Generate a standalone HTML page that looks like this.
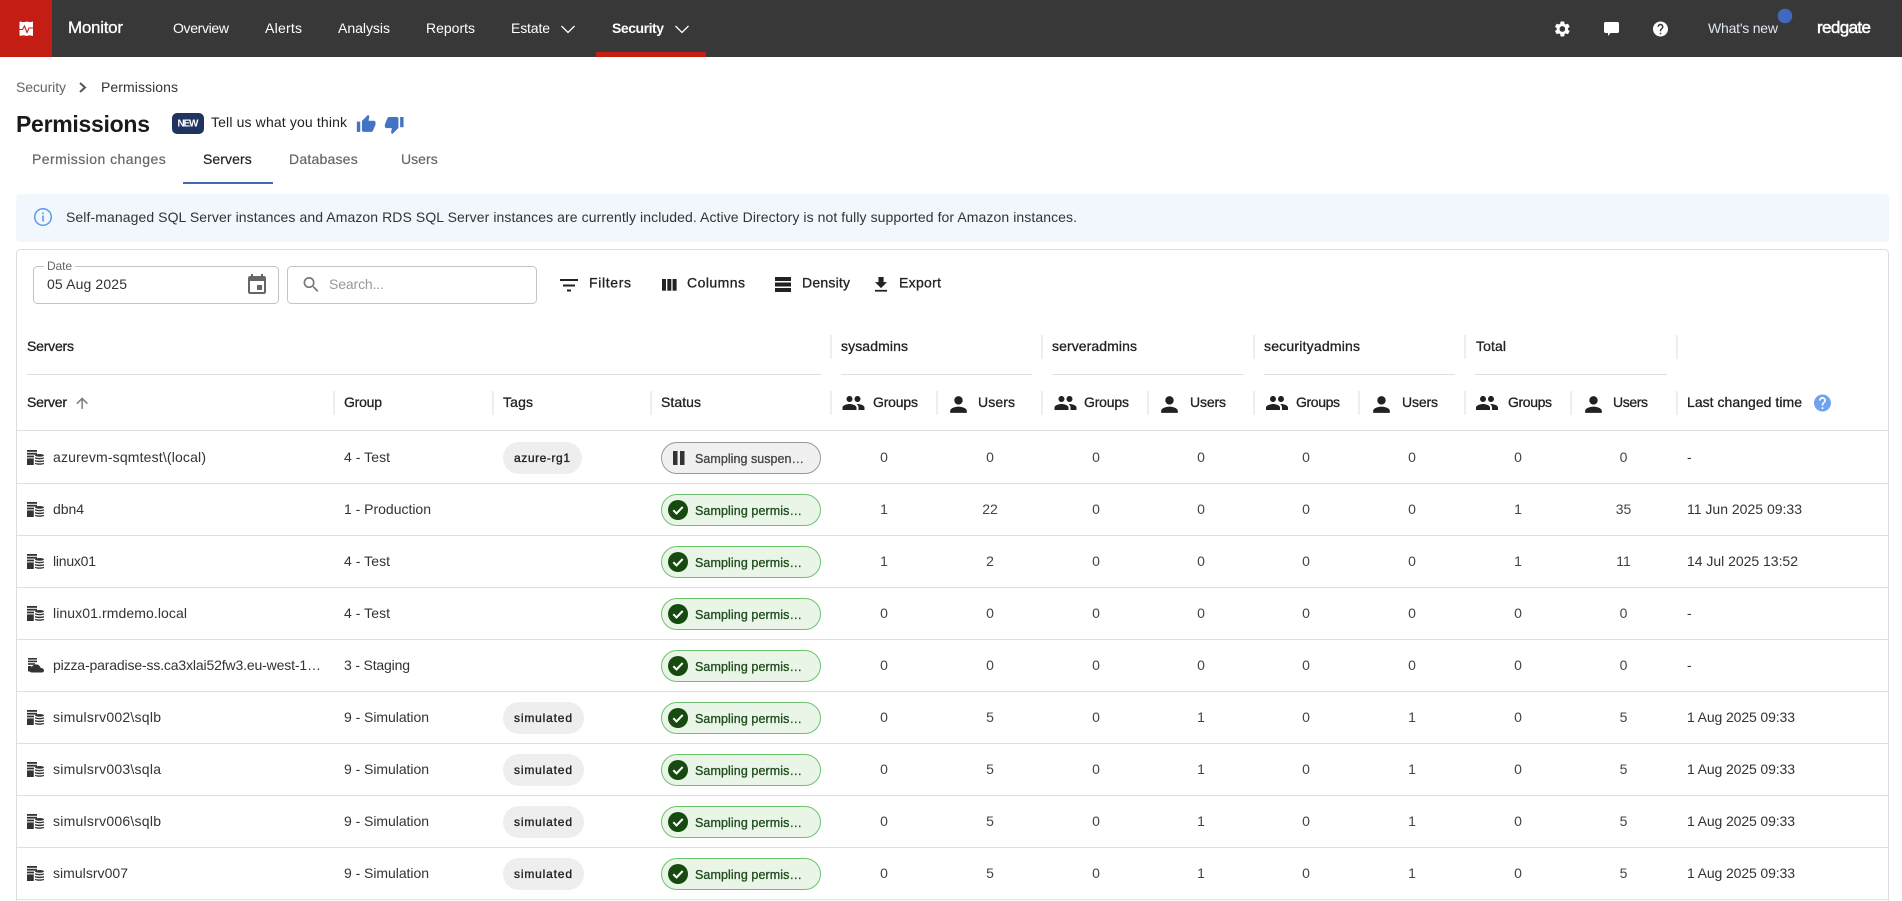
<!DOCTYPE html>
<html lang="en"><head><meta charset="utf-8"><title>Permissions - Servers</title>
<style>
html,body{margin:0;padding:0;background:#fff;width:1902px;height:901px;overflow:hidden}
svg{display:block;font-family:"Liberation Sans",Arial,sans-serif;font-size:14px;overflow:hidden}
.nav{fill:#fff;font-size:14px}
.b{fill:#333}
.g{fill:#666}
.m{fill:#222;stroke:#222;stroke-width:.3}
.tab{fill:#666;stroke:#666;stroke-width:.2;letter-spacing:.3px}
.c{text-anchor:middle;fill:#444}
.chip{fill:#222;stroke:#222;stroke-width:.35;font-size:12px}
.ps{fill:#444;stroke:#444;stroke-width:.3;font-size:12.5px}
.pg{fill:#1e4a1c;stroke:#1e4a1c;stroke-width:.3;font-size:12.5px}
.sep{fill:#eee}
.ln{fill:#e0e0e0}
</style></head><body>
<svg xmlns="http://www.w3.org/2000/svg" width="1902" height="901" viewBox="0 0 1902 901">
<defs>
<symbol id="srv" viewBox="0 0 17 15" width="17" height="15"><g fill="#333"><rect x="0" y="0" width="10" height="1.800"/><rect x="0" y="2.800" width="10" height="1.800"/><rect x="0" y="5.600" width="7" height="1.800"/><rect x="0" y="8.400" width="6.800" height="6.600"/><ellipse cx="12.500" cy="5.400" rx="4.500" ry="1.400"/><path d="M8 7.200c1.200.9 7.800.9 9 0v1.200c-1 1.200-8 1.200-9 0z"/><path d="M8 10c1.200.9 7.800.9 9 0v1.200c-1 1.200-8 1.200-9 0z"/><path d="M8 12.700c1.200.9 7.800.9 9 0v1.200c-1 1.200-8 1.200-9 0z"/></g></symbol>
<symbol id="cld" viewBox="0 0 16 15" width="16" height="15"><g fill="#333"><rect x="0" y="0" width="9" height="1.600"/><rect x="0" y="2.600" width="9" height="1.600"/><rect x="0" y="5.200" width="7" height="1.600"/><rect x="0" y="8" width="3.500" height="5.500"/><path d="M4 14.500c-1.600 0-2.600-1-2.600-2.300 0-1.200.9-2.100 2.100-2.300C4 7.800 5.800 6.400 8 6.400c2.300 0 4.100 1.400 4.600 3.500 1.900.1 3.400 1.100 3.400 2.600 0 1.200-1 2-2.500 2z"/></g></symbol>
<symbol id="grp" viewBox="0 0 24 24" width="24" height="24"><path fill="#222" d="M16 11c1.660 0 2.990-1.340 2.990-3S17.660 5 16 5c-1.660 0-3 1.340-3 3s1.340 3 3 3zm-8 0c1.660 0 2.990-1.340 2.990-3S9.660 5 8 5C6.340 5 5 6.340 5 8s1.340 3 3 3zm0 2c-2.330 0-7 1.170-7 3.500V19h14v-2.500c0-2.330-4.670-3.500-7-3.500zm8 0c-.29 0-.62.02-.97.05 1.160.84 1.970 1.970 1.970 3.450V19h6v-2.500c0-2.330-4.670-3.500-7-3.500z"/></symbol>
<symbol id="usr" viewBox="0 0 24 24" width="25" height="25"><path fill="#222" d="M12 12c2.210 0 4-1.790 4-4s-1.790-4-4-4-4 1.790-4 4 1.790 4 4 4zm0 2c-2.670 0-8 1.340-8 4v2h16v-2c0-2.660-5.330-4-8-4z"/></symbol>
<symbol id="ok" viewBox="0 0 20 20" width="20" height="20"><circle cx="10" cy="10" r="10" fill="#164a10"/><path d="M5.300 10.200l3.200 3.200 6.200-6.400" fill="none" stroke="#fff" stroke-width="2"/></symbol>
<symbol id="pillg" viewBox="0 0 161 33" width="161" height="33"><rect x=".5" y=".5" width="159" height="31" rx="15.500" fill="#e9f5e7" stroke="#6cc56b"/></symbol>
<symbol id="chip" viewBox="0 0 82 32" width="82" height="32"><rect width="81" height="32" rx="16" fill="#eeeeee"/></symbol>
</defs>

<!-- top nav -->
<rect width="1902" height="57" fill="#383838"/>
<rect width="52" height="57" fill="#c41d13"/>
<path d="M20.500 21.500c1.800.8 3.800.8 6.500 0 2.600.8 3.900.8 5.500 0 .5 0 .5.400.5 1v12c0 .6 0 1.500-.5 1.500-1.800-.8-3.300-.8-6 0-2.500-.8-4.300-.8-6 0-.5 0-1-.9-1-1.500v-12c0-.6.500-1 1-1z" fill="#fff"/>
<polyline points="19,29.500 22.500,29.500 24.500,26 27,32.500 29,28 33,28" fill="none" stroke="#c41d13" stroke-width="1.100"/>
<text x="68" y="33" font-size="17" fill="#fff" stroke="#fff" stroke-width=".3" textLength="55">Monitor</text>
<text class="nav" x="173" y="33" textLength="56">Overview</text>
<text class="nav" x="265" y="33" textLength="37">Alerts</text>
<text class="nav" x="338" y="33" textLength="52">Analysis</text>
<text class="nav" x="426" y="33" textLength="49">Reports</text>
<text class="nav" x="511" y="33" textLength="39">Estate</text>
<polyline points="561.500,26 568,32.500 574.500,26" fill="none" stroke="#fff" stroke-width="1.300"/>
<text class="nav" x="612" y="33" font-weight="bold" textLength="52">Security</text>
<polyline points="675.500,26 682,32.500 688.500,26" fill="none" stroke="#fff" stroke-width="1.300"/>
<rect x="596" y="52" width="110" height="5" fill="#c41d13"/>

<g transform="translate(1553 19.600) scale(.78)"><path fill="#fff" d="M19.140 12.940c.04-.3.06-.61.06-.94 0-.32-.02-.64-.07-.94l2.030-1.580c.18-.14.23-.41.12-.61l-1.920-3.320c-.12-.22-.37-.29-.59-.22l-2.390.96c-.5-.38-1.030-.7-1.620-.94l-.36-2.540c-.04-.24-.24-.41-.48-.41h-3.840c-.24 0-.43.17-.47.41l-.36 2.540c-.59.24-1.130.57-1.620.94l-2.390-.96c-.22-.08-.47 0-.59.22L2.740 8.870c-.12.21-.08.47.12.61l2.030 1.580c-.05.3-.09.63-.09.94s.02.64.07.94l-2.030 1.580c-.18.14-.23.41-.12.61l1.920 3.320c.12.22.37.29.59.22l2.390-.96c.5.38 1.030.7 1.620.94l.36 2.540c.05.24.24.41.48.41h3.840c.24 0 .44-.17.47-.41l.36-2.540c.59-.24 1.130-.56 1.620-.94l2.390.96c.22.08.47 0 .59-.22l1.920-3.320c.12-.22.07-.47-.12-.61l-2.010-1.580zM12 15.600c-1.980 0-3.600-1.620-3.600-3.600s1.620-3.600 3.600-3.600 3.600 1.620 3.600 3.600-1.620 3.600-3.600 3.600z"/></g>
<path fill="#fff" d="M1605.500 22h12c.8 0 1.500.7 1.500 1.500v8c0 .8-.7 1.500-1.500 1.500h-7l-2.500 3v-3h-2.500c-.8 0-1.500-.7-1.500-1.500v-8c0-.8.700-1.500 1.500-1.500z"/>
<g transform="translate(1651.500 20) scale(.75)"><path fill="#fff" d="M12 2C6.480 2 2 6.480 2 12s4.480 10 10 10 10-4.480 10-10S17.520 2 12 2zm1 17h-2v-2h2v2zm2.070-7.750l-.9.920C13.450 12.900 13 13.500 13 15h-2v-.5c0-1.100.45-2.100 1.170-2.830l1.240-1.260c.37-.36.59-.86.59-1.410 0-1.100-.9-2-2-2s-2 .9-2 2H8c0-2.210 1.790-4 4-4s4 1.790 4 4c0 .88-.36 1.680-.93 2.250z"/></g>
<text x="1708" y="33" fill="#dfe6f0" textLength="70">What's new</text>
<circle cx="1785" cy="16" r="7.300" fill="#4169c0"/>
<text x="1817" y="33" font-size="17" fill="#fff" stroke="#fff" stroke-width=".5" textLength="54">redgate</text>

<!-- breadcrumb & title -->
<text class="g" x="16" y="92" textLength="50">Security</text>
<polyline points="80,83 85,87.500 80,92" fill="none" stroke="#555" stroke-width="2"/>
<text class="b" x="101" y="92" textLength="77">Permissions</text>
<text x="16" y="132" font-size="23" font-weight="bold" fill="#1a1a1a" textLength="134">Permissions</text>
<rect x="172" y="113" width="32" height="21" rx="5" fill="#1f3460"/>
<text x="177.500" y="126.500" font-size="10" font-weight="bold" fill="#fff" textLength="21">NEW</text>
<text x="211" y="127" fill="#222" textLength="136">Tell us what you think</text>
<g transform="translate(356 114) scale(.85)"><path fill="#4472c4" d="M1 21h4V9H1v12zm22-11c0-1.100-.9-2-2-2h-6.310l.95-4.570.03-.32c0-.41-.17-.79-.44-1.060L14.170 1 7.590 7.590C7.220 7.950 7 8.450 7 9v10c0 1.100.9 2 2 2h9c.83 0 1.540-.5 1.840-1.220l3.020-7.050c.09-.23.14-.47.14-.73v-2z"/></g>
<g transform="translate(384 114.500) scale(.85)"><path fill="#4472c4" d="M15 3H6c-.83 0-1.540.5-1.840 1.220l-3.020 7.050c-.09.23-.14.47-.14.73v2c0 1.100.9 2 2 2h6.310l-.95 4.570-.03.32c0 .41.17.79.44 1.060L9.830 23l6.590-6.590c.36-.36.58-.86.58-1.410V5c0-1.100-.9-2-2-2zm4 0v12h4V3h-4z"/></g>

<!-- tabs -->
<text class="tab" x="32" y="164" textLength="134">Permission changes</text>
<text class="tab" x="203" y="164" style="fill:#222;stroke:#222" textLength="49">Servers</text>
<text class="tab" x="289" y="164" textLength="69">Databases</text>
<text class="tab" x="401" y="164" textLength="37">Users</text>
<rect x="183" y="182" width="90" height="2" fill="#4468b8"/>

<!-- banner -->
<rect x="16" y="194" width="1873" height="48" rx="4" fill="#f2f6fd"/>
<circle cx="43" cy="217" r="8.300" fill="none" stroke="#5b9bea" stroke-width="1.500"/>
<rect x="42.200" y="215.500" width="1.600" height="6" fill="#5b9bea"/><rect x="42.200" y="212.500" width="1.600" height="1.700" fill="#5b9bea"/>
<text class="b" x="66" y="222" textLength="1011">Self-managed SQL Server instances and Amazon RDS SQL Server instances are currently included. Active Directory is not fully supported for Amazon instances.</text>

<!-- card -->
<path d="M16.500 901V253.500a4 4 0 0 1 4-4H1884.500a4 4 0 0 1 4 4V901" fill="none" stroke="#ddd"/>

<!-- toolbar -->
<rect x="33.500" y="266.500" width="245" height="37" rx="4" fill="#fff" stroke="#c4c4c4"/>
<rect x="44" y="263" width="31" height="6" fill="#fff"/>
<text class="g" x="47" y="270" font-size="12" textLength="25">Date</text>
<text class="b" x="47" y="289" textLength="80">05 Aug 2025</text>
<g transform="translate(245 273)"><path fill="#666" d="M17 12h-5v5h5v-5zM16 1v2H8V1H6v2H5c-1.110 0-1.990.9-1.990 2L3 19c0 1.100.89 2 2 2h14c1.100 0 2-.9 2-2V5c0-1.100-.9-2-2-2h-1V1h-2zm3 18H5V8h14v11z"/></g>
<rect x="287.500" y="266.500" width="249" height="37" rx="4" fill="#fff" stroke="#c4c4c4"/>
<g transform="translate(301 274.500) scale(.85)"><path fill="#777" d="M15.500 14h-.79l-.28-.27C15.410 12.590 16 11.110 16 9.500 16 5.910 13.090 3 9.500 3S3 5.910 3 9.500 5.910 16 9.500 16c1.610 0 3.090-.59 4.230-1.570l.27.28v.79l5 4.990L20.490 19l-4.990-5zm-6 0C7.010 14 5 11.990 5 9.500S7.010 5 9.500 5 14 7.010 14 9.500 11.990 14 9.500 14z"/></g>
<text x="329" y="289" fill="#999" textLength="55">Search...</text>
<g fill="#222"><rect x="560" y="279" width="18" height="2"/><rect x="563" y="284.500" width="12" height="2"/><rect x="567" y="289.500" width="4" height="2"/></g>
<text class="m" x="589" y="287.500" textLength="42">Filters</text>
<g fill="#222"><rect x="662" y="279" width="4" height="11.700"/><rect x="667.300" y="279" width="4" height="11.700"/><rect x="672.600" y="279" width="4" height="11.700"/></g>
<text class="m" x="687" y="287.500" textLength="58">Columns</text>
<g fill="#222"><rect x="775" y="277" width="16" height="4"/><rect x="775" y="282.500" width="16" height="4"/><rect x="775" y="288" width="16" height="4"/></g>
<text class="m" x="802" y="287.500" textLength="48">Density</text>
<g transform="translate(870.700 274.400) scale(.86)"><path fill="#222" d="M19 9h-4V3H9v6H5l7 7 7-7zM5 18v2h14v-2H5z"/></g>
<text class="m" x="899" y="287.500" textLength="42">Export</text>

<!-- group header -->
<text class="m" x="27" y="351" textLength="47">Servers</text>
<text class="m" x="841" y="351" textLength="67">sysadmins</text>
<text class="m" x="1052" y="351" textLength="85">serveradmins</text>
<text class="m" x="1264" y="351" textLength="96">securityadmins</text>
<text class="m" x="1476" y="351" textLength="30">Total</text>
<g class="sep"><rect x="830" y="335" width="2" height="24"/><rect x="1041" y="335" width="2" height="24"/><rect x="1253" y="335" width="2" height="24"/><rect x="1464" y="335" width="2" height="24"/><rect x="1676" y="335" width="2" height="24"/></g>
<g class="ln"><rect x="27" y="374" width="794" height="1"/><rect x="841" y="374" width="191" height="1"/><rect x="1052" y="374" width="192" height="1"/><rect x="1264" y="374" width="191" height="1"/><rect x="1475" y="374" width="192" height="1"/></g>

<!-- column header -->
<text class="m" x="27" y="407" textLength="40">Server</text>
<g transform="translate(73.500 394.500) scale(.72)"><path fill="#777" d="M4 12l1.410 1.410L11 7.830V20h2V7.830l5.580 5.590L20 12l-8-8-8 8z"/></g>
<text class="m" x="344" y="407" textLength="38">Group</text>
<text class="m" x="503" y="407" textLength="30">Tags</text>
<text class="m" x="661" y="407" textLength="40">Status</text>
<g class="sep"><rect x="333" y="391" width="2" height="24"/><rect x="492" y="391" width="2" height="24"/><rect x="650" y="391" width="2" height="24"/><rect x="830" y="391" width="2" height="24"/><rect x="936" y="391" width="2" height="24"/><rect x="1041" y="391" width="2" height="24"/><rect x="1147" y="391" width="2" height="24"/><rect x="1253" y="391" width="2" height="24"/><rect x="1358" y="391" width="2" height="24"/><rect x="1464" y="391" width="2" height="24"/><rect x="1570" y="391" width="2" height="24"/><rect x="1676" y="391" width="2" height="24"/></g>
<use href="#grp" x="841.500" y="391"/><text class="m" x="873" y="407" textLength="45">Groups</text>
<use href="#usr" x="946" y="392"/><text class="m" x="978" y="407" textLength="37">Users</text>
<use href="#grp" x="1053.500" y="391"/><text class="m" x="1084" y="407" textLength="45">Groups</text>
<use href="#usr" x="1157" y="392"/><text class="m" x="1190" y="407" textLength="36">Users</text>
<use href="#grp" x="1265" y="391"/><text class="m" x="1296" y="407" textLength="44">Groups</text>
<use href="#usr" x="1369" y="392"/><text class="m" x="1402" y="407" textLength="36">Users</text>
<use href="#grp" x="1475" y="391"/><text class="m" x="1508" y="407" textLength="44">Groups</text>
<use href="#usr" x="1581" y="392"/><text class="m" x="1613" y="407" textLength="35">Users</text>
<text class="m" x="1687" y="407" textLength="115">Last changed time</text>
<g transform="translate(1812.300 392.800) scale(.85)"><path fill="#6fa3ef" d="M12 2C6.480 2 2 6.480 2 12s4.480 10 10 10 10-4.480 10-10S17.520 2 12 2zm1 17h-2v-2h2v2zm2.070-7.750l-.9.920C13.450 12.900 13 13.500 13 15h-2v-.5c0-1.100.45-2.100 1.170-2.830l1.240-1.260c.37-.36.59-.86.59-1.410 0-1.100-.9-2-2-2s-2 .9-2 2H8c0-2.210 1.790-4 4-4s4 1.790 4 4c0 .88-.36 1.680-.93 2.250z"/></g>

<!-- row lines -->
<g class="ln"><rect x="17" y="430" width="1871" height="1"/><rect x="17" y="483" width="1871" height="1"/><rect x="17" y="535" width="1871" height="1"/><rect x="17" y="587" width="1871" height="1"/><rect x="17" y="639" width="1871" height="1"/><rect x="17" y="691" width="1871" height="1"/><rect x="17" y="743" width="1871" height="1"/><rect x="17" y="795" width="1871" height="1"/><rect x="17" y="847" width="1871" height="1"/><rect x="17" y="899" width="1871" height="1"/></g>

<!-- row 1 -->
<use href="#srv" x="27" y="450"/><text class="b" x="53" y="462" textLength="153">azurevm-sqmtest\(local)</text><text class="b" x="344" y="462" textLength="46">4 - Test</text>
<rect x="503" y="442" width="79" height="32" rx="16" fill="#eee"/><text class="chip" x="514" y="462" textLength="56">azure-rg1</text>
<rect x="661.500" y="442.500" width="159" height="31" rx="15.500" fill="#f0f0f0" stroke="#999"/><rect x="673" y="451" width="4.500" height="14" fill="#333"/><rect x="680" y="451" width="4.500" height="14" fill="#333"/><text class="ps" x="695" y="463" textLength="109">Sampling suspen…</text>
<text class="c" x="884" y="462">0</text><text class="c" x="990" y="462">0</text><text class="c" x="1096" y="462">0</text><text class="c" x="1201" y="462">0</text><text class="c" x="1306" y="462">0</text><text class="c" x="1412" y="462">0</text><text class="c" x="1518" y="462">0</text><text class="c" x="1623.500" y="462">0</text><text class="b" x="1687" y="462">-</text>

<!-- row 2 -->
<use href="#srv" x="27" y="502"/><text class="b" x="53" y="514" textLength="31">dbn4</text><text class="b" x="344" y="514" textLength="87">1 - Production</text>
<use href="#pillg" x="661" y="494"/><use href="#ok" x="668" y="500"/><text class="pg" x="695" y="515" textLength="107">Sampling permis…</text>
<text class="c" x="884" y="514">1</text><text class="c" x="990" y="514">22</text><text class="c" x="1096" y="514">0</text><text class="c" x="1201" y="514">0</text><text class="c" x="1306" y="514">0</text><text class="c" x="1412" y="514">0</text><text class="c" x="1518" y="514">1</text><text class="c" x="1623.500" y="514">35</text><text class="b" x="1687" y="514" textLength="115">11 Jun 2025 09:33</text>

<!-- row 3 -->
<use href="#srv" x="27" y="554"/><text class="b" x="53" y="566" textLength="43">linux01</text><text class="b" x="344" y="566" textLength="46">4 - Test</text>
<use href="#pillg" x="661" y="546"/><use href="#ok" x="668" y="552"/><text class="pg" x="695" y="567" textLength="107">Sampling permis…</text>
<text class="c" x="884" y="566">1</text><text class="c" x="990" y="566">2</text><text class="c" x="1096" y="566">0</text><text class="c" x="1201" y="566">0</text><text class="c" x="1306" y="566">0</text><text class="c" x="1412" y="566">0</text><text class="c" x="1518" y="566">1</text><text class="c" x="1623.500" y="566">11</text><text class="b" x="1687" y="566" textLength="111">14 Jul 2025 13:52</text>

<!-- row 4 -->
<use href="#srv" x="27" y="606"/><text class="b" x="53" y="618" textLength="134">linux01.rmdemo.local</text><text class="b" x="344" y="618" textLength="46">4 - Test</text>
<use href="#pillg" x="661" y="598"/><use href="#ok" x="668" y="604"/><text class="pg" x="695" y="619" textLength="107">Sampling permis…</text>
<text class="c" x="884" y="618">0</text><text class="c" x="990" y="618">0</text><text class="c" x="1096" y="618">0</text><text class="c" x="1201" y="618">0</text><text class="c" x="1306" y="618">0</text><text class="c" x="1412" y="618">0</text><text class="c" x="1518" y="618">0</text><text class="c" x="1623.500" y="618">0</text><text class="b" x="1687" y="618">-</text>

<!-- row 5 -->
<use href="#cld" x="28" y="658"/><text class="b" x="53" y="670" textLength="268">pizza-paradise-ss.ca3xlai52fw3.eu-west-1…</text><text class="b" x="344" y="670" textLength="66">3 - Staging</text>
<use href="#pillg" x="661" y="650"/><use href="#ok" x="668" y="656"/><text class="pg" x="695" y="671" textLength="107">Sampling permis…</text>
<text class="c" x="884" y="670">0</text><text class="c" x="990" y="670">0</text><text class="c" x="1096" y="670">0</text><text class="c" x="1201" y="670">0</text><text class="c" x="1306" y="670">0</text><text class="c" x="1412" y="670">0</text><text class="c" x="1518" y="670">0</text><text class="c" x="1623.500" y="670">0</text><text class="b" x="1687" y="670">-</text>

<!-- row 6 -->
<use href="#srv" x="27" y="710"/><text class="b" x="53" y="722" textLength="108">simulsrv002\sqlb</text><text class="b" x="344" y="722" textLength="85">9 - Simulation</text>
<use href="#chip" x="503" y="702"/><text class="chip" x="514" y="722" textLength="58">simulated</text>
<use href="#pillg" x="661" y="702"/><use href="#ok" x="668" y="708"/><text class="pg" x="695" y="723" textLength="107">Sampling permis…</text>
<text class="c" x="884" y="722">0</text><text class="c" x="990" y="722">5</text><text class="c" x="1096" y="722">0</text><text class="c" x="1201" y="722">1</text><text class="c" x="1306" y="722">0</text><text class="c" x="1412" y="722">1</text><text class="c" x="1518" y="722">0</text><text class="c" x="1623.500" y="722">5</text><text class="b" x="1687" y="722" textLength="108">1 Aug 2025 09:33</text>

<!-- row 7 -->
<use href="#srv" x="27" y="762"/><text class="b" x="53" y="774" textLength="108">simulsrv003\sqla</text><text class="b" x="344" y="774" textLength="85">9 - Simulation</text>
<use href="#chip" x="503" y="754"/><text class="chip" x="514" y="774" textLength="58">simulated</text>
<use href="#pillg" x="661" y="754"/><use href="#ok" x="668" y="760"/><text class="pg" x="695" y="775" textLength="107">Sampling permis…</text>
<text class="c" x="884" y="774">0</text><text class="c" x="990" y="774">5</text><text class="c" x="1096" y="774">0</text><text class="c" x="1201" y="774">1</text><text class="c" x="1306" y="774">0</text><text class="c" x="1412" y="774">1</text><text class="c" x="1518" y="774">0</text><text class="c" x="1623.500" y="774">5</text><text class="b" x="1687" y="774" textLength="108">1 Aug 2025 09:33</text>

<!-- row 8 -->
<use href="#srv" x="27" y="814"/><text class="b" x="53" y="826" textLength="108">simulsrv006\sqlb</text><text class="b" x="344" y="826" textLength="85">9 - Simulation</text>
<use href="#chip" x="503" y="806"/><text class="chip" x="514" y="826" textLength="58">simulated</text>
<use href="#pillg" x="661" y="806"/><use href="#ok" x="668" y="812"/><text class="pg" x="695" y="827" textLength="107">Sampling permis…</text>
<text class="c" x="884" y="826">0</text><text class="c" x="990" y="826">5</text><text class="c" x="1096" y="826">0</text><text class="c" x="1201" y="826">1</text><text class="c" x="1306" y="826">0</text><text class="c" x="1412" y="826">1</text><text class="c" x="1518" y="826">0</text><text class="c" x="1623.500" y="826">5</text><text class="b" x="1687" y="826" textLength="108">1 Aug 2025 09:33</text>

<!-- row 9 -->
<use href="#srv" x="27" y="866"/><text class="b" x="53" y="878" textLength="75">simulsrv007</text><text class="b" x="344" y="878" textLength="85">9 - Simulation</text>
<use href="#chip" x="503" y="858"/><text class="chip" x="514" y="878" textLength="58">simulated</text>
<use href="#pillg" x="661" y="858"/><use href="#ok" x="668" y="864"/><text class="pg" x="695" y="879" textLength="107">Sampling permis…</text>
<text class="c" x="884" y="878">0</text><text class="c" x="990" y="878">5</text><text class="c" x="1096" y="878">0</text><text class="c" x="1201" y="878">1</text><text class="c" x="1306" y="878">0</text><text class="c" x="1412" y="878">1</text><text class="c" x="1518" y="878">0</text><text class="c" x="1623.500" y="878">5</text><text class="b" x="1687" y="878" textLength="108">1 Aug 2025 09:33</text>
</svg>
</body></html>
